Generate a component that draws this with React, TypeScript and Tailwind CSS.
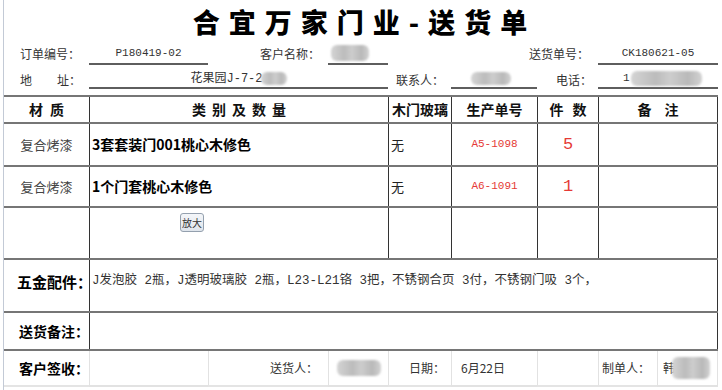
import React from "react";

const cjk = "font-['Noto_Sans_CJK_SC',sans-serif]";
const mono = "font-['Liberation_Mono','Noto_Sans_CJK_SC',monospace]";

function Blob({ w, h, className = "" }: { w: number; h: number; className?: string }) {
  return (
    <div
      className={`shrink-0 rounded-[6px] bg-[linear-gradient(90deg,#d4d4d4,#bcbcbc_35%,#cdcdcd_55%,#b9b9b9_80%,#d2d2d2)] blur-[1px] ${className}`}
      style={{ width: w, height: h }}
    />
  );
}

export default function App() {
  const vline = "border-l border-[#333]";
  const hline = "border-b-2 border-[#767676]";
  const under = "border-b-2 border-[#5e5e5e]";
  const mainCols = "grid grid-cols-[85px_299px_63px_86px_61px_120px]";

  return (
    <div className={`w-[722px] h-[390px] bg-white overflow-hidden whitespace-nowrap ${cjk} text-[#333]`}>
      <div className="ml-[3px] w-[715px] h-[390px] border-l border-[#c3cad6] flex flex-col">
        {/* Title */}
        <div className="h-[42px] flex items-center justify-center">
          <div className="text-[27px] leading-none font-black tracking-[9px] pl-[7px] text-black">
            合宜万家门业-送货单
          </div>
        </div>

        {/* Info row 1 */}
        <div className="flex h-[23px] text-[12px] pt-[1px]">
          <div className="w-[85px] flex items-center pl-[16px]">订单编号：</div>
          <div className={`w-[119px] flex items-center justify-center ${under} ${mono} text-[11px]`}>P180419-02</div>
          <div className="w-[120px] flex items-center justify-end pr-[8px]">客户名称：</div>
          <div className={`w-[60px] flex items-center ${under}`}>
            <Blob w={38} h={16} className="ml-[3px]" />
          </div>
          <div className="w-[210px] flex items-center justify-end pr-[9px]">送货单号：</div>
          <div className={`w-[120px] flex items-center justify-center ${under} ${mono} text-[11px]`}>CK180621-05</div>
        </div>

        {/* Info row 2 */}
        <div className="flex h-[24px] text-[12px] pt-[5px]">
          <div className="w-[85px] flex items-center pl-[16px] gap-[25px]">
            <span>地</span>
            <span>址：</span>
          </div>
          <div className={`w-[299px] flex items-center justify-center ${under}`}>
            <span className={`${mono} text-[12px]`}>花果园J-7-2</span>
            <Blob w={26} h={13} className="-ml-[2px]" />
          </div>
          <div className="w-[63px] flex items-center pl-[8px]">联系人：</div>
          <div className={`w-[86px] flex items-center justify-center ${under}`}>
            <Blob w={40} h={13} className="mr-[6px]" />
          </div>
          <div className="w-[61px] flex items-center justify-end pr-[6px]">电话：</div>
          <div className={`w-[120px] flex items-center ${under}`}>
            <span className={`${mono} text-[11px] ml-[25px]`}>1</span>
            <Blob w={71} h={15} className="ml-[1px]" />
          </div>
        </div>

        {/* Main table */}
        <div className="mt-[6px] border-t-2 border-[#767676]">
          {/* header */}
          <div className={`${mainCols} h-[27px] ${hline} text-[14px] font-bold text-[#111]`}>
            <div className="flex items-center justify-center tracking-[7px] pl-[7px]">材质</div>
            <div className={`flex items-center justify-center tracking-[6px] pl-[6px] ${vline}`}>类别及数量</div>
            <div className={`flex items-center justify-center ${vline}`}>木门玻璃</div>
            <div className={`flex items-center justify-center ${vline}`}>生产单号</div>
            <div className={`flex items-center justify-center tracking-[9px] pl-[9px] ${vline}`}>件数</div>
            <div className={`flex items-center justify-center tracking-[13px] pl-[13px] border-r border-[#333] ${vline}`}>备注</div>
          </div>

          {/* row 1 */}
          <div className={`${mainCols} h-[43px] ${hline}`}>
            <div className="flex items-center justify-center text-[13px] text-[#444]">复合烤漆</div>
            <div className={`flex items-center pl-[2px] text-[14px] font-bold text-black ${vline}`}>3套套装门001桃心木修色</div>
            <div className={`flex items-center pl-[2px] text-[13px] text-[#222] ${vline}`}>无</div>
            <div className={`flex items-center justify-center ${mono} text-[11px] text-[#e53935] ${vline}`}>A5-1098</div>
            <div className={`flex items-center justify-center ${mono} text-[17px] text-[#e53935] ${vline}`}>5</div>
            <div className={`border-r border-[#333] ${vline}`} />
          </div>

          {/* row 2 */}
          <div className={`${mainCols} h-[41px] ${hline}`}>
            <div className="flex items-center justify-center text-[13px] text-[#444]">复合烤漆</div>
            <div className={`flex items-center pl-[2px] text-[14px] font-bold text-black ${vline}`}>1个门套桃心木修色</div>
            <div className={`flex items-center pl-[2px] text-[13px] text-[#222] ${vline}`}>无</div>
            <div className={`flex items-center justify-center ${mono} text-[11px] text-[#e53935] ${vline}`}>A6-1091</div>
            <div className={`flex items-center justify-center ${mono} text-[17px] text-[#e53935] ${vline}`}>1</div>
            <div className={`border-r border-[#333] ${vline}`} />
          </div>

          {/* row 3 */}
          <div className={`${mainCols} h-[52px] ${hline}`}>
            <div />
            <div className={`flex items-start ${vline}`}>
              <div className="ml-[90px] mt-[5px] w-[24px] h-[19px] flex items-center justify-center rounded-[3px] border border-[#94a0ae] bg-[linear-gradient(180deg,#f4f6f9,#dfe5ec)] text-[10px] text-[#333] leading-none">
                放大
              </div>
            </div>
            <div className={vline} />
            <div className={vline} />
            <div className={vline} />
            <div className={`border-r border-[#333] ${vline}`} />
          </div>

          {/* 五金配件 */}
          <div className={`grid grid-cols-[85px_629px] h-[53px] ${hline}`}>
            <div className="flex items-center pl-[13px] pb-[6px] text-[15px] font-bold text-black">五金配件：</div>
            <div className={`flex items-center pl-[2px] pb-[8px] ${mono} text-[12.5px] text-[#333] border-r border-[#333] ${vline}`}>
              J发泡胶 2瓶，J透明玻璃胶 2瓶，L23-L21铬 3把，不锈钢合页 3付，不锈钢门吸 3个，
            </div>
          </div>

          {/* 送货备注 */}
          <div className={`grid grid-cols-[85px_629px] h-[38px] ${hline}`}>
            <div className="flex items-center pl-[15px] text-[14px] font-bold text-black">送货备注：</div>
            <div className={`border-r border-[#333] ${vline}`} />
          </div>

          {/* 客户签收 */}
          <div className="flex h-[36px] text-[12px]">
            <div className="w-[85px] flex items-center pl-[15px] text-[14px] font-bold text-black border-b-2 border-[#e4e4e4]">客户签收：</div>
            <div className={`w-[119px] border-l border-[#e2e2e2] ${under}`} />
            <div className="w-[120px] flex items-center justify-end pr-[10px] border-l border-[#e2e2e2] border-b-2 border-b-[#e4e4e4]">送货人：</div>
            <div className={`w-[60px] flex items-center border-l border-[#e2e2e2] ${under}`}>
              <Blob w={44} h={16} className="ml-[8px]" />
            </div>
            <div className="w-[63px] flex items-center justify-end pr-[6px] border-l border-[#e2e2e2] border-b-2 border-b-[#e4e4e4]">日期：</div>
            <div className={`w-[86px] flex items-center pl-[9px] border-l border-[#e2e2e2] ${under}`}>6月22日</div>
            <div className="w-[61px] border-l border-[#e2e2e2] border-b-2 border-b-[#e4e4e4]" />
            <div className="w-[59px] flex items-center pl-[3px] border-l border-[#e2e2e2] border-b-2 border-b-[#e4e4e4]">制单人：</div>
            <div className={`w-[61px] flex items-center pl-[5px] border-l border-r border-[#e2e2e2] ${under}`}>
              <span>韩</span>
              <Blob w={38} h={22} className="-ml-[3px]" />
            </div>
          </div>
        </div>
      </div>
    </div>
  );
}
